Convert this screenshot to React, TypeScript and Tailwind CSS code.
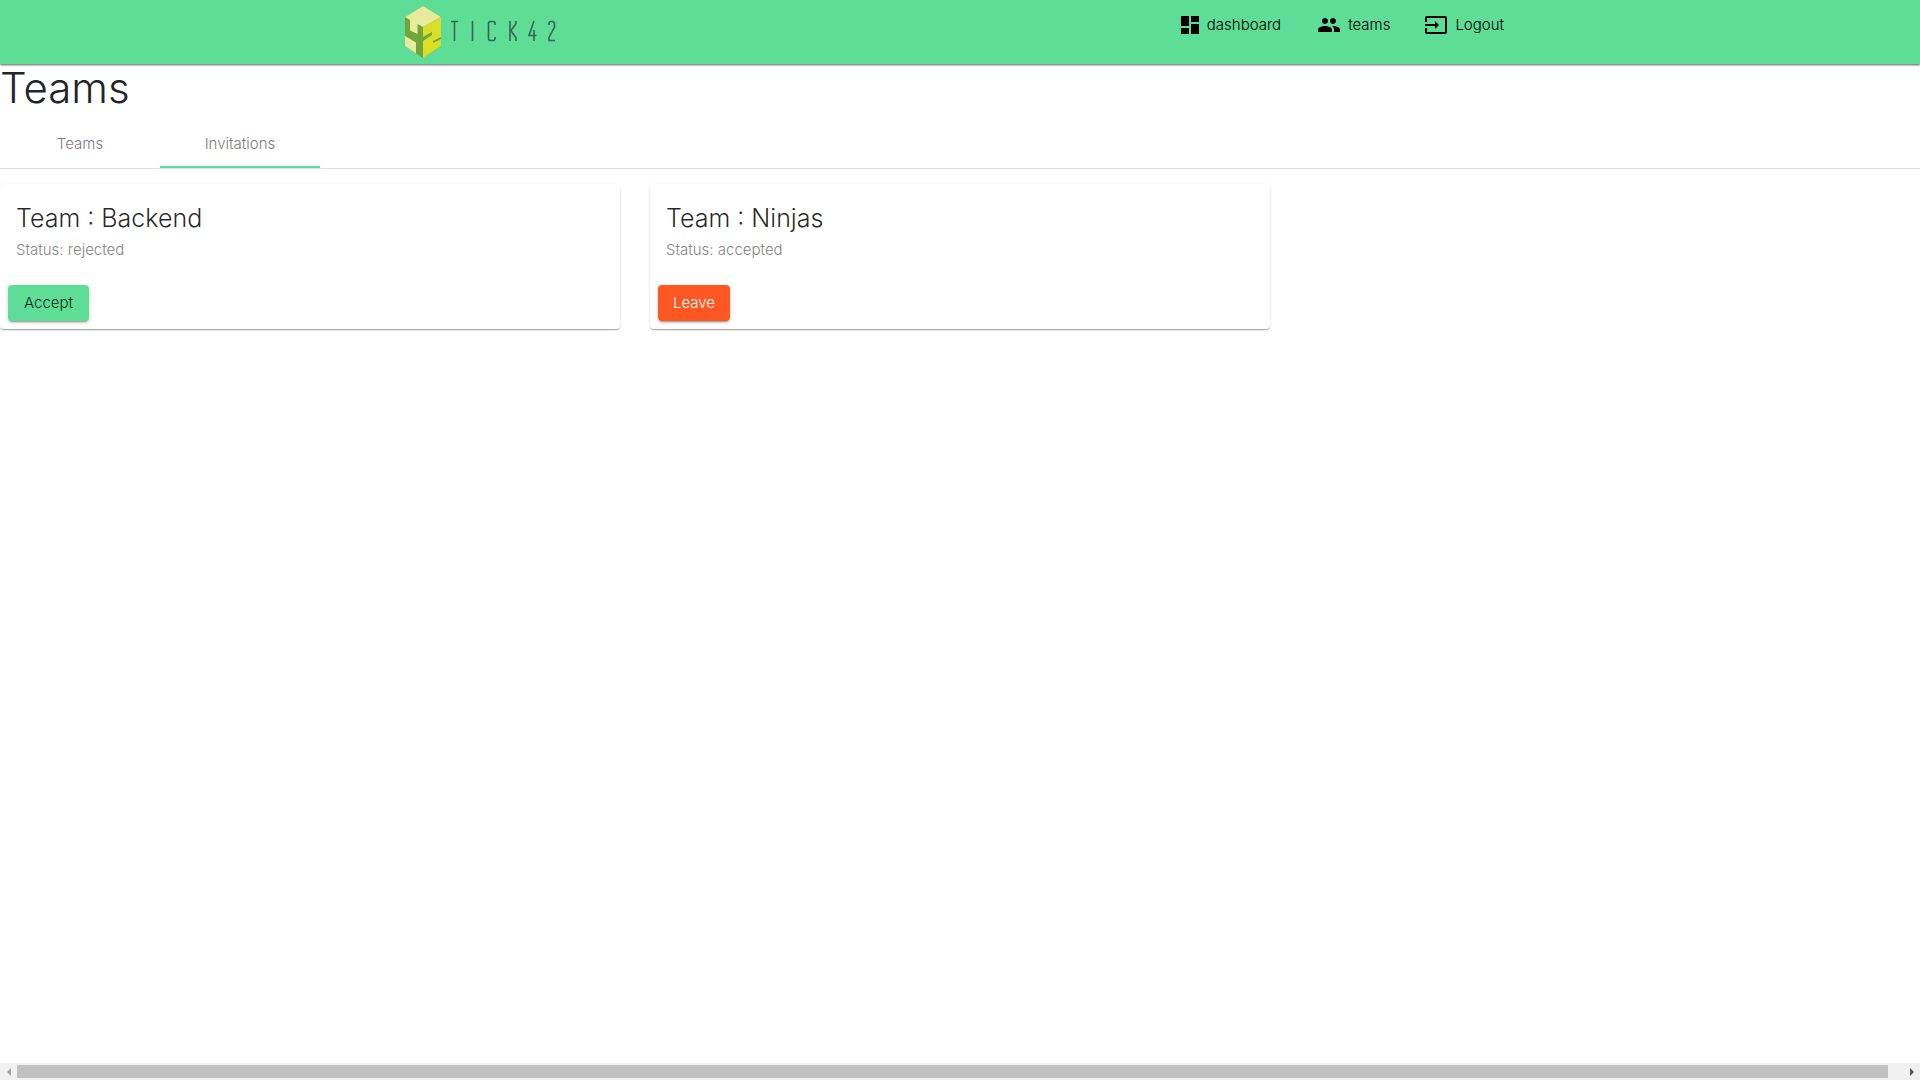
import { MdDashboard, MdInput, MdPeople } from 'react-icons/md';

const links = [
  { label: 'dashboard', icon: MdDashboard, gap: 'gap-[5px]', space: 'mr-[36px]' },
  { label: 'teams', icon: MdPeople, gap: 'gap-[7px]', space: 'mr-[34px]' },
  { label: 'Logout', icon: MdInput, gap: 'gap-[7px]', space: 'mr-[11px]' },
];

const invitations = [
  { team: 'Backend', status: 'rejected', action: 'Accept', tone: 'bg-[#5ddd95] text-black/85 w-[81px]' },
  { team: 'Ninjas', status: 'accepted', action: 'Leave', tone: 'bg-[#ff5722] text-white w-[72px]' },
];

function Logo() {
  return (
    <svg viewBox="0 0 151 52" className="h-[52px] w-[151px]" role="img" aria-label="TICK42">
      <path d="M18 0 36 11 36 40 18 52 0 40 0 11Z" fill="#6fa53a" />
      <path d="M18 0 36 11 18 21 12.500 18 12.500 28 5 24.500 5 14 0 11Z" fill="#e8eb9d" />
      <path d="M18 21 36 11 36 40 18 52Z" fill="#d8df26" />
      <path d="M17 31.500 27 26 27 29 18 35Z" fill="#6fa53a" />
      <path d="M0 30 11 36.500 11 47.500 0 40Z" fill="#e8eb9d" />
      <path d="M28 35 36 31 36 33 28 37Z" fill="#6fa53a" />
      <g fill="none" stroke="#40614f" strokeWidth="1.600">
        <path d="M46 15.500H53M49.500 15.500V35M67.500 15V35M90 19V17Q90 15.500 88 15.500H85.500Q83.500 15.500 83.500 17.500V32.500Q83.500 34.500 85.500 34.500H88Q90 34.500 90 32.500V31M105 15V35M111 15V17.500L106 24.500 111 32V35M129 15 124 29.500H131.500M129 24V35M144 19V17.500Q144 15.500 146 15.500H147Q149.500 15.500 149.500 18V21L144 31.500V34.500H150" />
      </g>
    </svg>
  );
}

export default function App() {
  return (
    <div className="flex min-h-screen flex-col bg-white font-['Inter',sans-serif] font-light text-[#212529]">
      <header className="h-16 bg-[#5ddd95] shadow-[0_1px_2px_rgba(0,0,0,0.65)]">
        <div className="mx-auto flex max-w-[1140px] items-start justify-between px-[15px]">
          <a href="#home" className="mt-[6px]"><Logo /></a>
          <nav className="mt-[13px] flex text-[15px] leading-6 text-black">
            {links.map(({ label, icon: Icon, gap, space }) => (
              <a key={label} href={`#${label}`} className={`flex items-center ${gap} ${space}`}>
                <Icon className="size-6" aria-hidden="true" />
                {label}
              </a>
            ))}
          </nav>
        </div>
      </header>
      <main>
        <h1 className="mb-2 text-[42px] leading-[48px]">Teams</h1>
        <div role="tablist" className="flex h-[49px] border-b border-[#e0e0e0] text-[15px] text-[#7b7b7b]">
          <button role="tab" aria-selected="false" className="w-40">Teams</button>
          <button role="tab" aria-selected="true" className="relative w-40">
            Invitations
            <span className="absolute inset-x-0 bottom-0 h-[2px] bg-[#5ddd95]" />
          </button>
        </div>
        <section className="mt-[15px] grid grid-cols-3 gap-[30px]">
          {invitations.map(({ team, status, action, tone }) => (
            <article key={team} className="rounded-[4px] bg-white shadow-[0_2px_1px_-1px_rgba(0,0,0,0.2),0_1px_1px_0_rgba(0,0,0,0.14),0_1px_3px_0_rgba(0,0,0,0.12)]">
              <div className="px-4 pt-[18px]">
                <h2 className="text-[25px] leading-8 text-black/85">Team : {team}</h2>
                <p className="mt-1 text-[15px] leading-6 text-[#858585]">Status: {status}</p>
              </div>
              <div className="px-2 pt-[23px] pb-2">
                <button className={`h-9 rounded-[4px] text-[15px] shadow-[0_3px_1px_-2px_rgba(0,0,0,0.2),0_2px_2px_0_rgba(0,0,0,0.14),0_1px_5px_0_rgba(0,0,0,0.12)] ${tone}`}>
                  {action}
                </button>
              </div>
            </article>
          ))}
        </section>
      </main>
      <div className="mt-auto flex h-[17px] items-center bg-[#f1f1f1]">
        <button aria-label="Scroll left" className="flex h-[17px] w-[17px] shrink-0 items-center justify-center">
          <svg viewBox="0 0 4 8" className="h-2 w-1" fill="#a3a3a3"><path d="M4 0V8L0 4Z" /></svg>
        </button>
        <div className="mr-[15px] h-[13px] grow bg-[#c1c1c1]" />
        <button aria-label="Scroll right" className="flex h-[17px] w-[17px] shrink-0 items-center justify-center">
          <svg viewBox="0 0 4 8" className="h-2 w-1" fill="#505050"><path d="M0 0V8L4 4Z" /></svg>
        </button>
      </div>
    </div>
  );
}
